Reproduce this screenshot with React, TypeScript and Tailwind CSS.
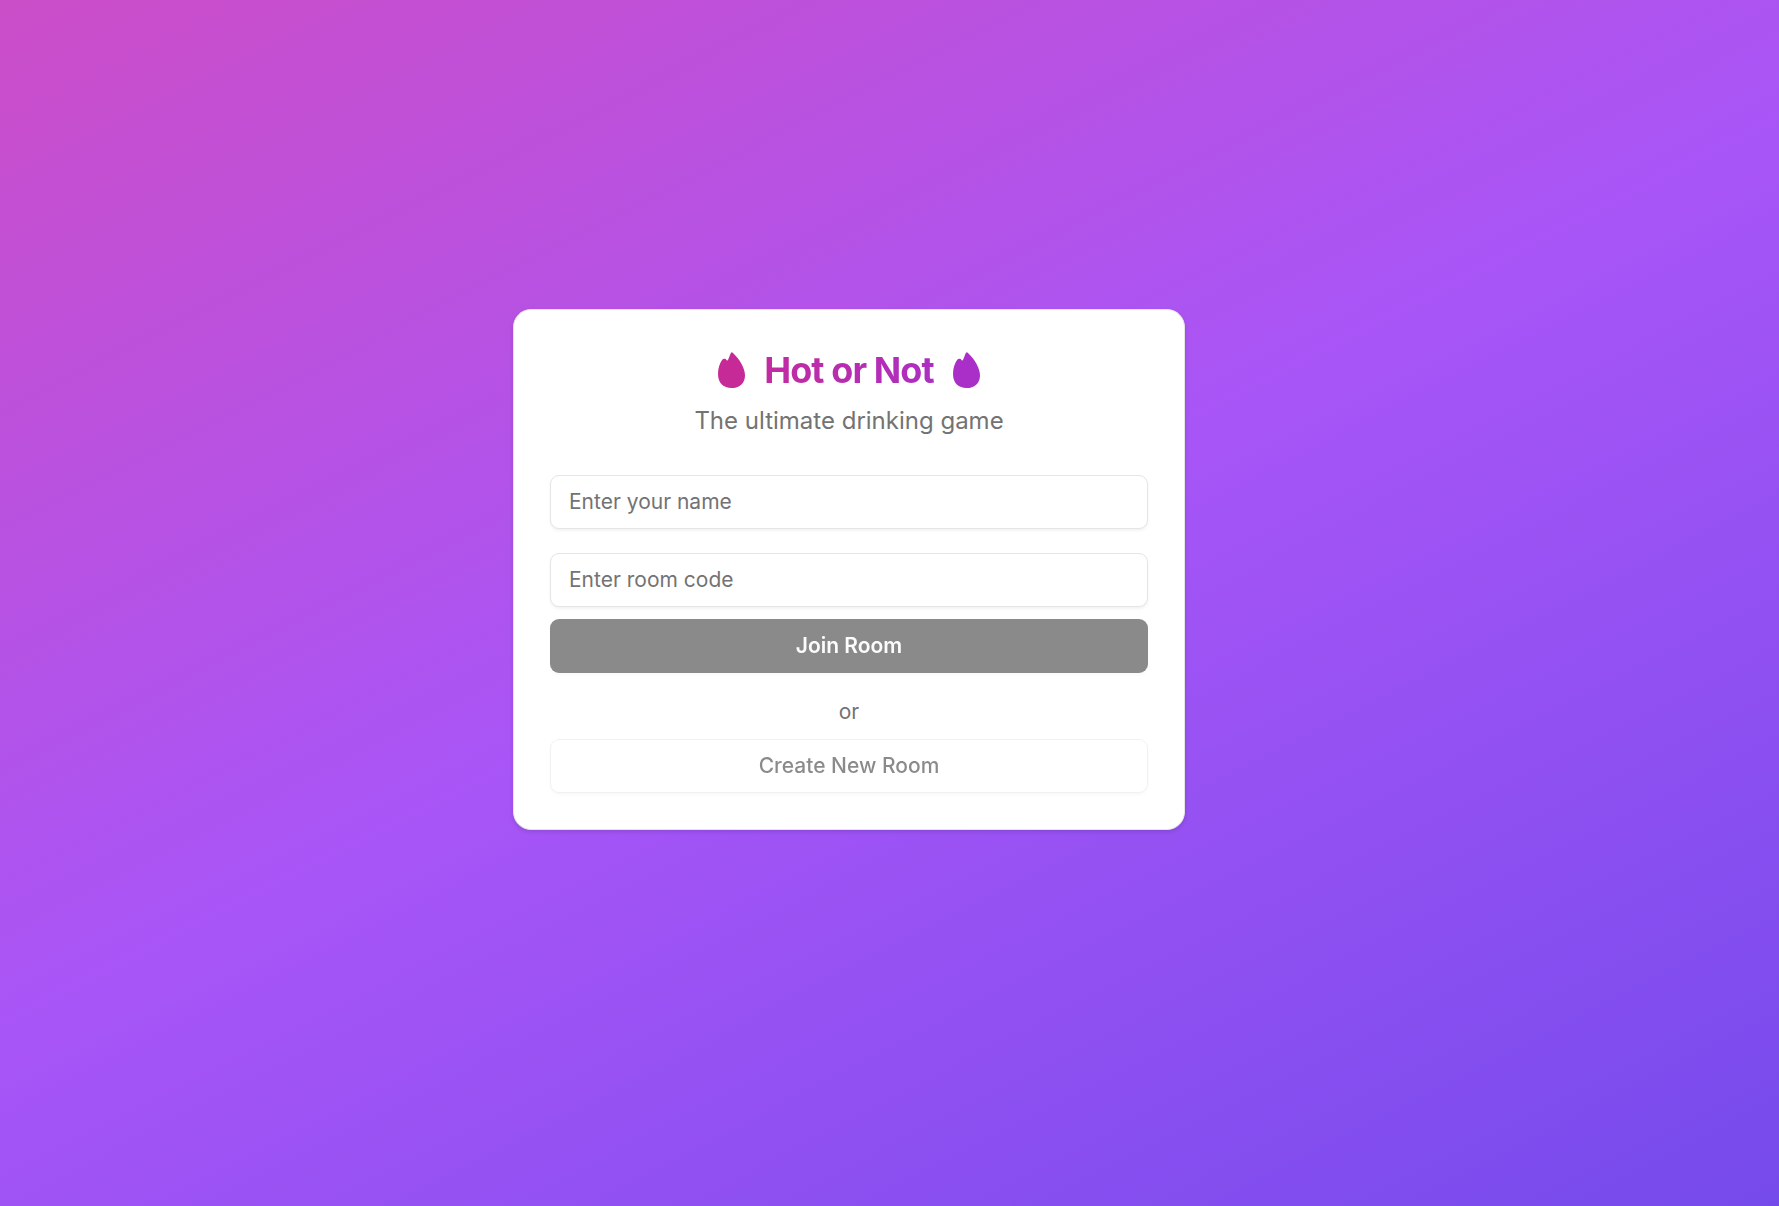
import { useState } from "react";

const inputClass =
  "h-[54px] w-full rounded-[9px] border border-neutral-200 bg-white px-[18px] pb-0.5 text-[21px] leading-[30px] text-neutral-950 shadow-[0_2px_3px_rgba(0,0,0,0.05)] outline-none placeholder:text-neutral-500";

const buttonClass =
  "h-[54px] w-full rounded-[9px] text-[21px] leading-[30px] shadow-[0_2px_3px_rgba(0,0,0,0.05)] disabled:opacity-50";

function Flame({ className }: { className: string }) {
  return (
    <svg viewBox="0 0 27 36" aria-hidden="true" className={`h-9 w-[27px] fill-current ${className}`}>
      <path d="M13.8.2C13.3.2 12.9.9 12.4 2L10.2 7.6C9.8 8.7 9 8.9 8.5 7.9C7.7 6.4 5.3 6.3 4.2 7.8C1.6 11.6 0 16.5 0 22C0 31 5.6 36 13.5 36C21.4 36 27 31.2 27 23.4C27 16 21.5 7.2 15 1C14.5.5 14.2.2 13.8.2Z" />
    </svg>
  );
}

export default function App() {
  const [name, setName] = useState("");
  const [roomCode, setRoomCode] = useState("");

  return (
    <main className="flex min-h-screen items-center justify-center bg-[linear-gradient(153deg,#cb4dc8,#a855f7_49%,#754aeb)] pr-[81px] pb-[67px] font-['Inter',sans-serif]">
      <div className="w-full max-w-2xl rounded-[18px] border border-neutral-200 bg-white p-9 shadow-[0_2px_4px_rgba(0,0,0,0.12)]">
        <div className="mb-9 flex flex-col gap-[9px] text-center">
          <h1 className="flex items-center justify-center gap-[19px] bg-[linear-gradient(90deg,#db2777,#9333ea)] bg-clip-text text-4xl leading-12 font-bold tracking-tight text-transparent">
            <Flame className="text-[#c52a97]" />
            Hot or Not
            <Flame className="text-[#a92fc8]" />
          </h1>
          <p className="text-2xl leading-9 text-neutral-500">The ultimate drinking game</p>
        </div>

        <div className="flex flex-col gap-6">
          <input
            aria-label="Enter your name"
            placeholder="Enter your name"
            value={name}
            onChange={(e) => setName(e.target.value)}
            className={inputClass}
          />
          <div className="flex flex-col gap-3">
            <input
              aria-label="Enter room code"
              placeholder="Enter room code"
              value={roomCode}
              onChange={(e) => setRoomCode(e.target.value)}
              className={inputClass}
            />
            <button
              disabled={!name || !roomCode}
              className={`${buttonClass} bg-neutral-900 font-semibold text-neutral-50`}
            >
              Join Room
            </button>
          </div>
          <div className="flex flex-col gap-3">
            <p className="text-center text-[21px] leading-[30px] text-neutral-500">or</p>
            <button
              disabled={!name}
              className={`${buttonClass} border border-neutral-200 bg-white font-medium text-neutral-900`}
            >
              Create New Room
            </button>
          </div>
        </div>
      </div>
    </main>
  );
}
